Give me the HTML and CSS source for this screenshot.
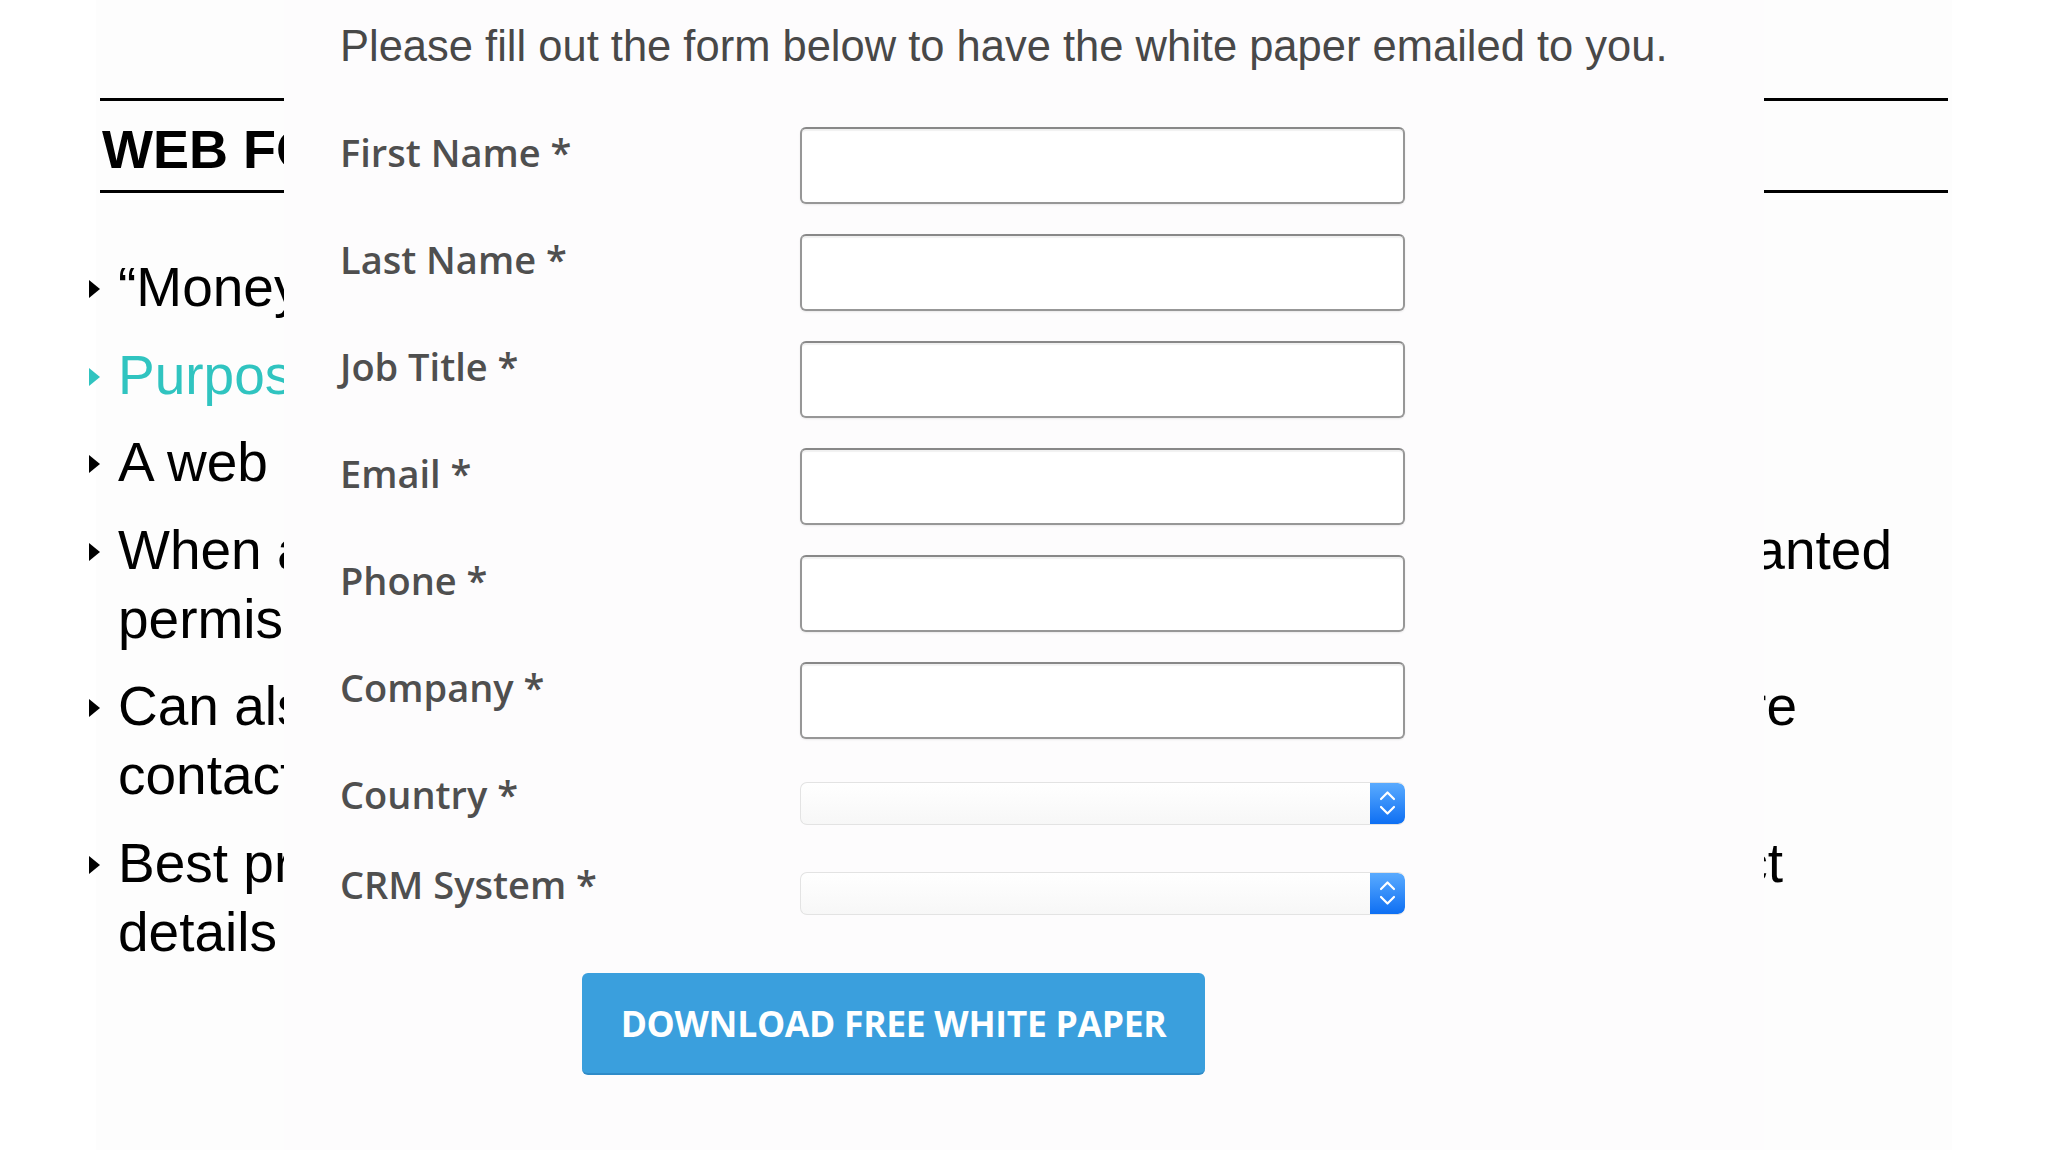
FILE: index.html
```html
<!DOCTYPE html>
<html lang="en">
<head>
    <meta charset="UTF-8">
    <meta name="viewport" content="width=device-width, initial-scale=1.0">
    <title>Web Forms</title>
    <link rel="stylesheet" href="styles.css">
</head>
<body>

<div class="slide">
    <div class="slide-head">
        <h1>WEB FORMS</h1>
    </div>
    <ul class="points">
        <li><div class="ln">“Money pages” for capturing leads</div></li>
        <li class="accent"><div class="ln">Purpose: collect visitor information</div></li>
        <li><div class="ln">A web page with a form on it</div></li>
        <li>
            <div class="ln split end-1"><span class="head">When a visitor fills out the form, they have gr</span><span class="tail">anted</span></div>
            <div class="ln">permission to be contacted</div>
        </li>
        <li>
            <div class="ln split end-2"><span class="head">Can also be used for event registrations, surveys or mo</span><span class="tail">re</span></div>
            <div class="ln">contact requests</div>
        </li>
        <li>
            <div class="ln split end-3"><span class="head">Best practice: keep the form short and only colle</span><span class="tail">ct</span></div>
            <div class="ln">details you really need</div>
        </li>
    </ul>
</div>

<!-- screenshot of the landing page form, laid over the slide -->
<div class="overlay">
    <p class="intro">Please fill out the form below to have the white paper emailed to you.</p>
    <form class="paper-form">
        <div class="field">
            <label for="first-name">First Name *</label>
            <input type="text" id="first-name">
        </div>
        <div class="field">
            <label for="last-name">Last Name *</label>
            <input type="text" id="last-name">
        </div>
        <div class="field">
            <label for="job-title">Job Title *</label>
            <input type="text" id="job-title">
        </div>
        <div class="field">
            <label for="email">Email *</label>
            <input type="text" id="email">
        </div>
        <div class="field">
            <label for="phone">Phone *</label>
            <input type="text" id="phone">
        </div>
        <div class="field">
            <label for="company">Company *</label>
            <input type="text" id="company">
        </div>
        <div class="field pick">
            <label>Country *</label>
            <div class="select">
                <span class="select-value"></span>
                <span class="stepper">
                    <svg width="35" height="43" viewBox="0 0 35 43">
                        <polyline points="11,17 17.5,10.5 24,17" />
                        <polyline points="11,25 17.5,31.5 24,25" />
                    </svg>
                </span>
            </div>
        </div>
        <div class="field pick">
            <label>CRM System *</label>
            <div class="select">
                <span class="select-value"></span>
                <span class="stepper">
                    <svg width="35" height="43" viewBox="0 0 35 43">
                        <polyline points="11,17 17.5,10.5 24,17" />
                        <polyline points="11,25 17.5,31.5 24,25" />
                    </svg>
                </span>
            </div>
        </div>
        <button type="button" class="download-btn">Download Free White Paper</button>
    </form>
</div>

</body>
</html>
```

FILE: styles.css
```css
body {
    margin: 0;
    width: 2048px;
    height: 1150px;
    overflow: hidden;
    position: relative;
    background: #fff;
    font-family: "Liberation Sans", Arial, sans-serif;
    color: #000;
}

/* slide behind the form */
.slide {
    margin-left: 96px;
    width: 1856px;
    height: 1150px;
    padding: 98px 4px 0 4px;
    box-sizing: border-box;
    background: #fdfdfd;
}

.slide-head {
    border-top: 3px solid #000;
    border-bottom: 3px solid #000;
}

.slide-head h1 {
    margin: 0;
    padding: 21px 0 14px 2px;
    font-size: 54px;
    line-height: 54px;
    font-weight: bold;
}

.points {
    list-style: none;
    margin: 60px 0 0 0;
    padding: 0 0 0 18px;
}

.points li {
    position: relative;
    margin-bottom: 18.5px;
    font-size: 55px;
    line-height: 69px;
}

.points li::before {
    content: "";
    position: absolute;
    left: -29px;
    top: 27px;
    border-left: 11px solid currentColor;
    border-top: 9px solid transparent;
    border-bottom: 9px solid transparent;
}

.points li.accent {
    color: #30c4c0;
}

/* the form covers the slide from x=284, so lines are cut there */
.ln {
    width: 166px;
    overflow: hidden;
    white-space: nowrap;
}

.ln.split {
    display: flex;
}

.ln.split .head {
    width: 166px;
    flex: none;
    overflow: hidden;
}

.ln.split .tail {
    margin-left: auto;
}

.end-1 {
    width: 1774px;
}

.end-2 {
    width: 1679px;
}

.end-3 {
    width: 1665px;
}

/* the form screenshot */
.overlay {
    position: absolute;
    left: 284px;
    top: 0;
    width: 1480px;
    height: 1150px;
    padding-left: 56px;
    box-sizing: border-box;
    background: #fdfcfd;
}

.intro {
    margin: 0;
    padding-top: 22px;
    font-size: 43.5px;
    line-height: 49px;
    color: #484848;
    white-space: nowrap;
}

.paper-form {
    margin-top: 56px;
}

.field {
    display: flex;
    align-items: flex-start;
}

.field + .field {
    margin-top: 30px;
}

.field.pick {
    margin-top: 43px;
}

.field.pick + .field.pick {
    margin-top: 47px;
}

.field label {
    width: 460px;
    flex-shrink: 0;
    padding-top: 2px;
    font-family: "Open Sans", sans-serif;
    font-weight: 600;
    font-size: 38px;
    line-height: 46px;
    color: #4f4f4f;
}

.field.pick label {
    padding-top: 0;
    margin-top: -11px;
}

.field input {
    width: 605px;
    height: 77px;
    margin: 0;
    box-sizing: border-box;
    border: 2px solid #979797;
    border-top-color: #888;
    border-radius: 6px;
    background: #fff;
    box-shadow: inset 0 2px 1px rgba(0, 0, 0, 0.06), 0 1px 2px rgba(0, 0, 0, 0.08);
}

.select {
    display: flex;
    width: 605px;
    height: 43px;
    box-sizing: border-box;
    border: 1px solid #e3e3e3;
    border-right: none;
    border-radius: 7px;
    background: linear-gradient(#fff, #f7f7f7);
    overflow: hidden;
}

.select-value {
    flex: 1;
}

.stepper {
    width: 35px;
    background: linear-gradient(#5aabff, #0e6ff3);
    border-radius: 0 7px 7px 0;
}

.stepper svg {
    display: block;
    margin-top: -1px;
}

.stepper polyline {
    fill: none;
    stroke: #fff;
    stroke-width: 2.2;
    stroke-linecap: round;
    stroke-linejoin: round;
}

.download-btn {
    display: block;
    margin: 58px 0 0 242px;
    width: 623px;
    height: 102px;
    padding: 0;
    border: none;
    border-bottom: 2px solid #2f8bc8;
    border-radius: 6px;
    background-color: #3a9fdd;
    color: #fff;
    font-family: "Open Sans", sans-serif;
    font-weight: 700;
    font-size: 35.5px;
    letter-spacing: -0.3px;
    text-transform: uppercase;
    cursor: pointer;
}
```
